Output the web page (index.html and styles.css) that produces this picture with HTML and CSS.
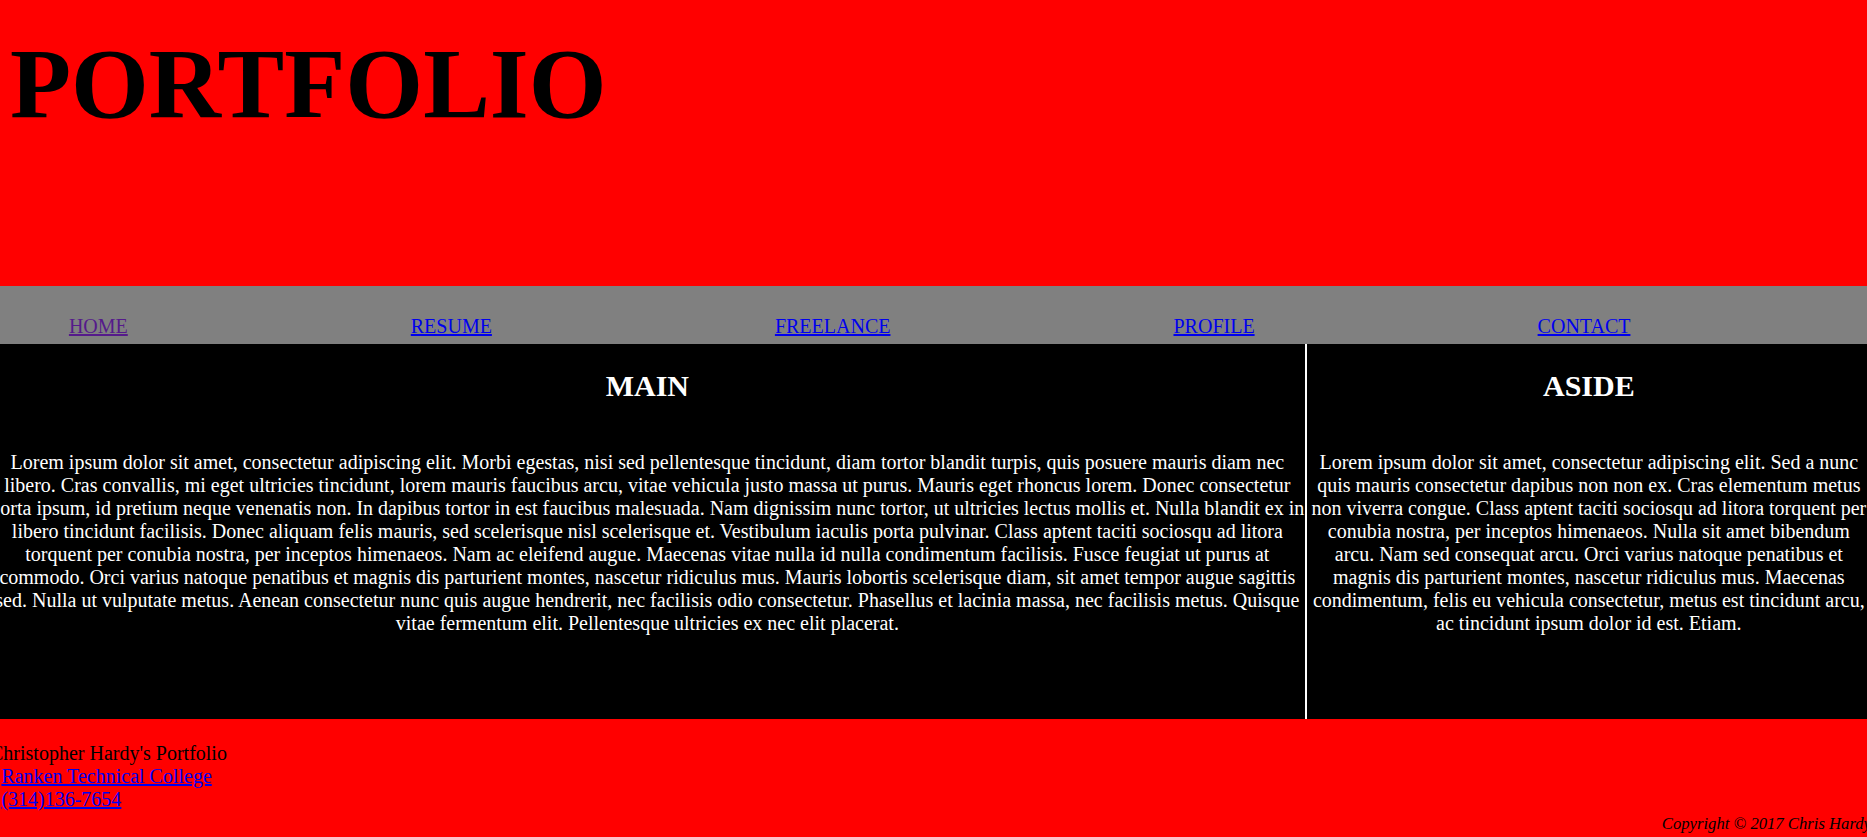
FILE: index.html
```html
<!DOCTYPE html>
<html lang="en">
<head>
<meta charset="utf-8">
<title>Portfolio</title>
<link rel="stylesheet" href="styles.css">
</head>
<body>
<header class="site-header">
  <h1 class="site-title">PORTFOLIO</h1>
</header>
<nav class="site-nav">
  <a class="nav-link nav-link-visited" href="#">HOME</a>
  <a class="nav-link" href="#">RESUME</a>
  <a class="nav-link" href="#">FREELANCE</a>
  <a class="nav-link" href="#">PROFILE</a>
  <a class="nav-link" href="#">CONTACT</a>
</nav>
<div class="content">
  <main class="main-col">
    <h2 class="col-title">MAIN</h2>
    <p class="col-text">Lorem ipsum dolor sit amet, consectetur adipiscing elit. Morbi egestas, nisi sed pellentesque tincidunt, diam tortor blandit turpis, quis posuere mauris diam nec libero. Cras convallis, mi eget ultricies tincidunt, lorem mauris faucibus arcu, vitae vehicula justo massa ut purus. Mauris eget rhoncus lorem. Donec consectetur porta ipsum, id pretium neque venenatis non. In dapibus tortor in est faucibus malesuada. Nam dignissim nunc tortor, ut ultricies lectus mollis et. Nulla blandit ex in libero tincidunt facilisis. Donec aliquam felis mauris, sed scelerisque nisl scelerisque et. Vestibulum iaculis porta pulvinar. Class aptent taciti sociosqu ad litora torquent per conubia nostra, per inceptos himenaeos. Nam ac eleifend augue. Maecenas vitae nulla id nulla condimentum facilisis. Fusce feugiat ut purus at commodo. Orci varius natoque penatibus et magnis dis parturient montes, nascetur ridiculus mus. Mauris lobortis scelerisque diam, sit amet tempor augue sagittis sed. Nulla ut vulputate metus. Aenean consectetur nunc quis augue hendrerit, nec facilisis odio consectetur. Phasellus et lacinia massa, nec facilisis metus. Quisque vitae fermentum elit. Pellentesque ultricies ex nec elit placerat.</p>
  </main>
  <aside class="side-col">
    <h2 class="col-title">ASIDE</h2>
    <p class="col-text">Lorem ipsum dolor sit amet, consectetur adipiscing elit. Sed a nunc quis mauris consectetur dapibus non non ex. Cras elementum metus non viverra congue. Class aptent taciti sociosqu ad litora torquent per conubia nostra, per inceptos himenaeos. Nulla sit amet bibendum arcu. Nam sed consequat arcu. Orci varius natoque penatibus et magnis dis parturient montes, nascetur ridiculus mus. Maecenas condimentum, felis eu vehicula consectetur, metus est tincidunt arcu, ac tincidunt ipsum dolor id est. Etiam.</p>
  </aside>
</div>
<footer class="site-footer">
  <p class="footer-info">Christopher Hardy's Portfolio<br><a class="footer-link" href="#">Ranken Technical College</a><br><a class="footer-link" href="#">(314)136-7654</a></p>
  <p class="copyright">Copyright &copy; 2017 Chris Hardy</p>
</footer>
</body>
</html>
```

FILE: styles.css
```css
html {
  overflow: hidden;
}

body {
  margin: 0;
  font-family: "Liberation Serif", "Times New Roman", serif;
  font-size: 20px;
  color: #000;
}

.site-header {
  background: #ff0000;
  height: 286px;
  padding: 25.5px 0 0 10px;
  box-sizing: border-box;
}

.site-title {
  margin: 0;
  font-size: 100px;
  font-weight: bold;
  line-height: normal;
}

.site-nav {
  background: #808080;
  height: 58px;
  box-sizing: border-box;
  padding: 29.2px 0 0 68.9px;
  display: flex;
  gap: 283px;
  line-height: 23px;
}

.nav-link {
  color: #0000ee;
  text-decoration: underline;
}

.nav-link-visited {
  color: #551a8b;
}

.content {
  display: grid;
  grid-template-columns: 70% 30%;
  width: calc(100% + 14px);
  margin-left: -10px;
  height: 375px;
  background: #000;
  color: #fff;
  text-align: center;
}

.main-col {
  border-right: 2px solid #fff;
  box-sizing: border-box;
  min-width: 0;
}

.side-col {
  min-width: 0;
}

.col-title {
  font-size: 30px;
  font-weight: bold;
  line-height: 34.5px;
  margin: 24.6px 0 47.9px;
}

.col-text {
  margin: 0;
  line-height: 23px;
}

.site-footer {
  display: flow-root;
  background: #ff0000;
  width: calc(100% + 14px);
  margin-left: -10px;
  height: 118px;
}

.footer-info {
  margin: 23.4px 0 0;
  line-height: 23px;
}

.footer-link {
  color: #0000ee;
  margin-left: 11.4px;
}

.copyright {
  margin: 2.5px 0 0;
  text-align: right;
  font-style: italic;
  font-size: 16.67px;
  line-height: normal;
}
```
